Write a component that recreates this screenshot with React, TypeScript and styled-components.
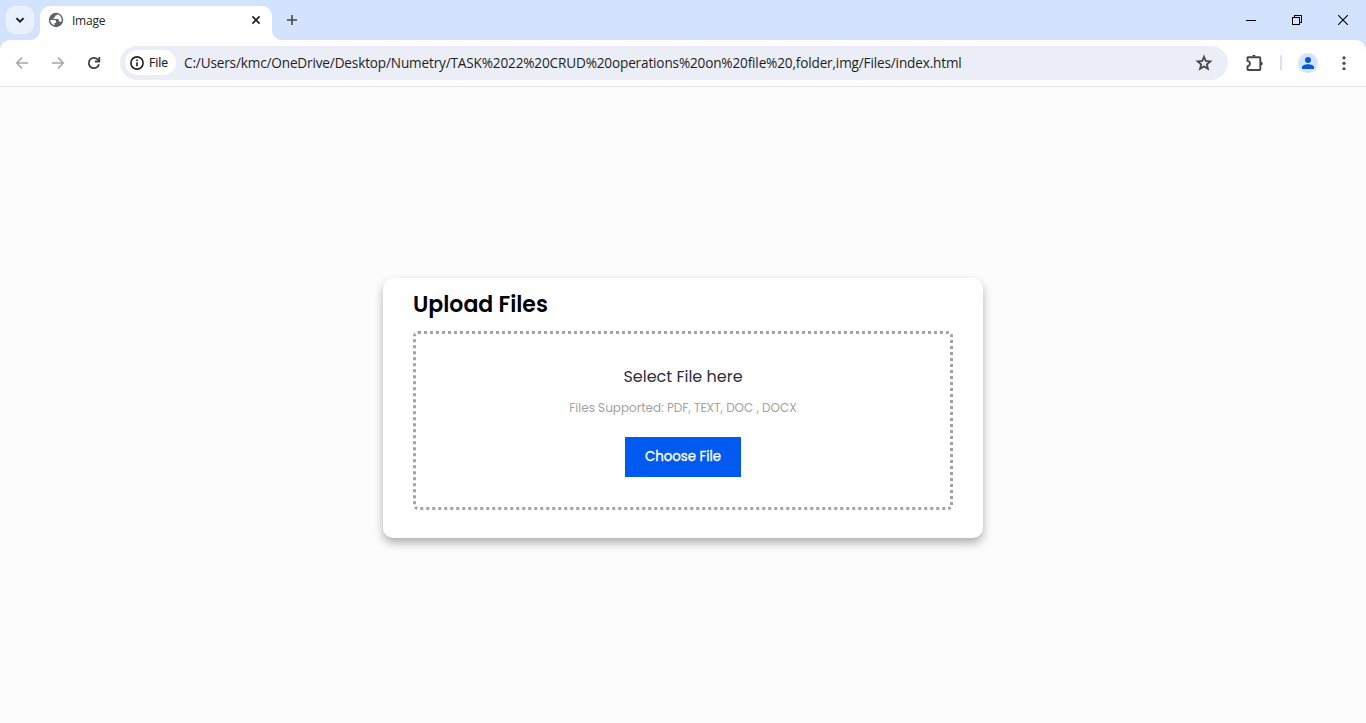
import React from "react";
import styled, { createGlobalStyle } from "styled-components";

const GlobalStyle = createGlobalStyle`
  *, *::before, *::after { box-sizing: border-box; }
  body { margin: 0; background: #fcfcfc; overflow: hidden; }
`;

const ui = `"Segoe UI", "Open Sans", "Noto Sans", sans-serif`;
const display = `"Poppins", "Inter", sans-serif`;

const Window = styled.div`
  display: flex;
  flex-direction: column;
  width: 100%;
  height: 723px;
  background: #d3e3fd;
  font-family: ${ui};
  color: #1f1f1f;
`;

const TabStrip = styled.header`
  display: flex;
  align-items: flex-start;
  height: 40px;
  padding-left: 6px;
`;

const TabSearch = styled.button`
  display: grid;
  place-items: center;
  width: 28px;
  height: 28px;
  margin: 6px 6px 0 0;
  padding: 0;
  border: 0;
  border-radius: 9px;
  background: #e9f1fe;
`;

const Tab = styled.div`
  position: relative;
  display: flex;
  align-items: center;
  width: 232px;
  height: 34px;
  margin-top: 6px;
  padding: 0 10px 6px 8px;
  border-radius: 10px 10px 0 0;
  background: #fff;

  &::before,
  &::after {
    content: "";
    position: absolute;
    bottom: 0;
    width: 10px;
    height: 10px;
  }
  &::before {
    left: -10px;
    background: radial-gradient(circle at 0 0, transparent 9.5px, #fff 10.5px);
  }
  &::after {
    right: -10px;
    background: radial-gradient(circle at 100% 0, transparent 9.5px, #fff 10.5px);
  }
`;

const TabTitle = styled.span`
  flex: 1;
  margin-left: 8px;
  padding-top: 2px;
  font-size: 12px;
  line-height: 16px;
  letter-spacing: -0.25px;
`;

const NewTab = styled.button`
  display: grid;
  place-items: center;
  width: 28px;
  height: 28px;
  margin: 6px 0 0 6px;
  padding: 0;
  border: 0;
  background: none;
`;

const WindowControls = styled.div`
  display: flex;
  height: 40px;
  margin-left: auto;
`;

const WindowButton = styled.button`
  display: grid;
  place-items: center;
  width: 46px;
  height: 40px;
  padding: 0;
  border: 0;
  background: none;
`;

const Toolbar = styled.nav`
  display: flex;
  align-items: center;
  height: 47px;
  padding: 0 8px 1px;
  border-bottom: 1px solid #e1e3e5;
  border-radius: 10px 10px 0 0;
  background: #fff;
`;

const ToolButton = styled.button<{ $gap?: number }>`
  display: grid;
  place-items: center;
  width: 28px;
  height: 28px;
  margin-right: ${(p) => p.$gap ?? 8}px;
  padding: 0;
  border: 0;
  background: none;
`;

const AddressBar = styled.div`
  display: flex;
  align-items: center;
  flex: 1;
  height: 34px;
  margin: 0 12px 0 4px;
  padding: 0 10px 0 5px;
  border-radius: 17px;
  background: #ebeef7;
`;

const Chip = styled.span`
  display: flex;
  align-items: center;
  gap: 5px;
  width: 51px;
  height: 25px;
  padding-left: 5px;
  border-radius: 13px;
  background: #fff;
  font-size: 12px;
  font-weight: 500;
  -webkit-text-stroke: 0.2px #1f1f1f;
`;

const Url = styled.span`
  flex: 1;
  margin-left: 8px;
  font-size: 13.6px;
  line-height: 20px;
  white-space: nowrap;
  letter-spacing: -0.16px;
`;

const Divider = styled.span`
  width: 2px;
  height: 16px;
  margin-right: 12px;
  border-radius: 1px;
  background: #d3e3fd;
`;

const Page = styled.main`
  display: flex;
  align-items: center;
  justify-content: center;
  flex: 1;
  border-bottom: 1px solid #fff;
  background: #fcfcfc;
  font-family: ${display};
`;

const Card = styled.section`
  width: 600px;
  height: 260px;
  margin-top: 7px;
  padding: 10px 30px 28px;
  border-radius: 10px;
  background: #fff;
  box-shadow: 0 5px 10px rgba(0, 0, 0, 0.3);
`;

const Heading = styled.h3`
  margin: 0 0 10px;
  font-size: 22px;
  font-weight: 600;
  line-height: 33px;
  color: #000;
`;

const DropBox = styled.div`
  display: flex;
  flex-direction: column;
  align-items: center;
  height: 179px;
  padding-top: 31px;
  border: 3px dotted #a3a3a3;
  border-radius: 5px;
`;

const Prompt = styled.h4`
  margin: 0;
  font-size: 16px;
  font-weight: 400;
  line-height: 24px;
  color: #2f2f3a;
`;

const Supported = styled.p`
  margin: 10px 0 20px;
  font-size: 12px;
  line-height: 18px;
  color: #a3a3a3;
`;

const ChooseButton = styled.button`
  width: 116px;
  height: 40px;
  padding: 0;
  border: 0;
  background: #005af0;
  color: #fff;
  font: 400 13.333px/20px ${display};
  -webkit-text-stroke: 0.3px #fff;
`;

export default function App() {
  return (
    <Window>
      <GlobalStyle />
      <TabStrip>
        <TabSearch aria-label="Search tabs">
          <svg width="10" height="10" viewBox="0 0 10 10" fill="none" stroke="#1f1f1f" strokeWidth="2">
            <path d="M1.4 3.1 5 6.6 8.6 3.1" />
          </svg>
        </TabSearch>
        <Tab>
          <svg width="16" height="16" viewBox="0 0 16 16">
            <circle cx="8" cy="8" r="7.2" fill="#5f6368" />
            <path d="M2.3 8.1h3.8c1.5 0 2 .7 2 1.7v1.1H6.5v2.4c-2.500-.6-4.300-2.700-4.200-5.200Z" fill="#fff" />
            <path d="M9.3 2.3c-.2.9-.9 1.4-2.2 1.4v1.7H5.600v1.500h4.200c.8 0 1 .5 1 1.200v1.300h1.300c.6 0 .9.2 1.200.6a5.800 5.800 0 0 0-4-7.700Z" fill="#fff" />
          </svg>
          <TabTitle>Image</TabTitle>
          <svg width="12" height="12" viewBox="0 0 12 12" stroke="#1f1f1f" strokeWidth="1.6">
            <path d="m2.4 2.4 7.2 7.2m0-7.2L2.4 9.6" />
          </svg>
        </Tab>
        <NewTab aria-label="New tab">
          <svg width="12" height="12" viewBox="0 0 12 12" stroke="#474747" strokeWidth="1.6">
            <path d="M6 .9v10.2M.9 6h10.2" />
          </svg>
        </NewTab>
        <WindowControls>
          <WindowButton aria-label="Minimize">
            <svg width="10" height="10" viewBox="0 0 10 10" shapeRendering="crispEdges">
              <path d="M0 5h10v1H0z" />
            </svg>
          </WindowButton>
          <WindowButton aria-label="Restore">
            <svg width="10" height="10" viewBox="0 0 10 10" fill="none" stroke="#000" shapeRendering="crispEdges">
              <path d="M.5 2.5h7v7h-7zM2.5 2.5v-2h7v7h-2" />
            </svg>
          </WindowButton>
          <WindowButton aria-label="Close">
            <svg width="10" height="10" viewBox="0 0 10 10" stroke="#000" strokeWidth="1.1">
              <path d="m0 0 10 10M10 0 0 10" />
            </svg>
          </WindowButton>
        </WindowControls>
      </TabStrip>

      <Toolbar>
        <ToolButton aria-label="Back">
          <svg width="14" height="14" viewBox="0 0 14 14" fill="none" stroke="#a9a9a9" strokeWidth="1.6">
            <path d="M13 7H2M7 1.6 1.7 7 7 12.4" />
          </svg>
        </ToolButton>
        <ToolButton aria-label="Forward">
          <svg width="14" height="14" viewBox="0 0 14 14" fill="none" stroke="#a9a9a9" strokeWidth="1.6">
            <path d="M1 7h11M7 1.6 12.3 7 7 12.4" />
          </svg>
        </ToolButton>
        <ToolButton aria-label="Reload">
          <svg width="14" height="14" viewBox="0 0 14 14" fill="none" stroke="#404040" strokeWidth="1.8">
            <path d="M12 8.2A5.2 5.2 0 1 1 11.2 4l1 1.3" />
            <path d="M12.3.9v4.6H7.8" />
          </svg>
        </ToolButton>
        <AddressBar>
          <Chip>
            <svg width="14" height="14" viewBox="0 0 14 14" fill="none" stroke="#1f1f1f" strokeWidth="1.6">
              <circle cx="7" cy="7" r="6.1" />
              <path d="M7 6.2v4M7 3.6v1.5" />
            </svg>
            File
          </Chip>
          <Url>C:/Users/kmc/OneDrive/Desktop/Numetry/TASK%2022%20CRUD%20operations%20on%20file%20,folder,img/Files/index.html</Url>
          <ToolButton $gap={0} aria-label="Bookmark">
            <svg width="20" height="20" viewBox="0 0 24 24" fill="#474747" stroke="#474747" strokeWidth="0.2">
              <path d="m8.85 16.83 3.15-1.9 3.15 1.93-.83-3.6 2.78-2.4-3.65-.33L12 7.13l-1.45 3.38-3.65.32 2.78 2.43-.83 3.57ZM5.83 21l1.62-7.03L2 9.25l7.2-.63L12 2l2.8 6.63 7.2.62-5.45 4.72L18.18 21 12 17.27 5.83 21Z" />
            </svg>
          </ToolButton>
        </AddressBar>
        <ToolButton $gap={12} aria-label="Extensions">
          <svg width="20" height="20" viewBox="0 0 20 20" fill="none" stroke="#474747" strokeWidth="1.9" strokeLinejoin="round">
            <path d="M4.1 4.2h11.400c.6 0 .8.3.8.8v11.200c0 .5-.3.8-.8.8H4.300c-.5 0-.8-.3-.8-.8v-2.900c1.600-.3 2.400-1.200 2.400-2.700S5.100 8.200 3.500 7.900V5c0-.5.2-.8.6-.8Z" />
            <path d="M8 3.600a1.900 1.900 0 0 1 3.800 0ZM16.900 8.700a1.900 1.900 0 0 1 0 3.800Z" fill="#474747" stroke="none" />
          </svg>
        </ToolButton>
        <Divider />
        <ToolButton aria-label="Profile">
          <svg width="20" height="20" viewBox="0 0 20 20" fill="#0b57d0">
            <circle cx="10" cy="10" r="10" fill="#d3e3fd" />
            <circle cx="10" cy="7" r="3" />
            <path d="M4 16v-1.600c0-2.100 3.200-3.100 6-3.100s6 1 6 3.100V16Z" />
          </svg>
        </ToolButton>
        <ToolButton $gap={0} aria-label="Menu">
          <svg width="4" height="14" viewBox="0 0 4 14" fill="#474747">
            <circle cx="2" cy="1.8" r="1.6" />
            <circle cx="2" cy="7.3" r="1.6" />
            <circle cx="2" cy="12.8" r="1.6" />
          </svg>
        </ToolButton>
      </Toolbar>

      <Page>
        <Card>
          <Heading>Upload Files</Heading>
          <DropBox>
            <Prompt>Select File here</Prompt>
            <Supported>Files Supported: PDF, TEXT, DOC , DOCX</Supported>
            <ChooseButton>Choose File</ChooseButton>
          </DropBox>
        </Card>
      </Page>
    </Window>
  );
}
